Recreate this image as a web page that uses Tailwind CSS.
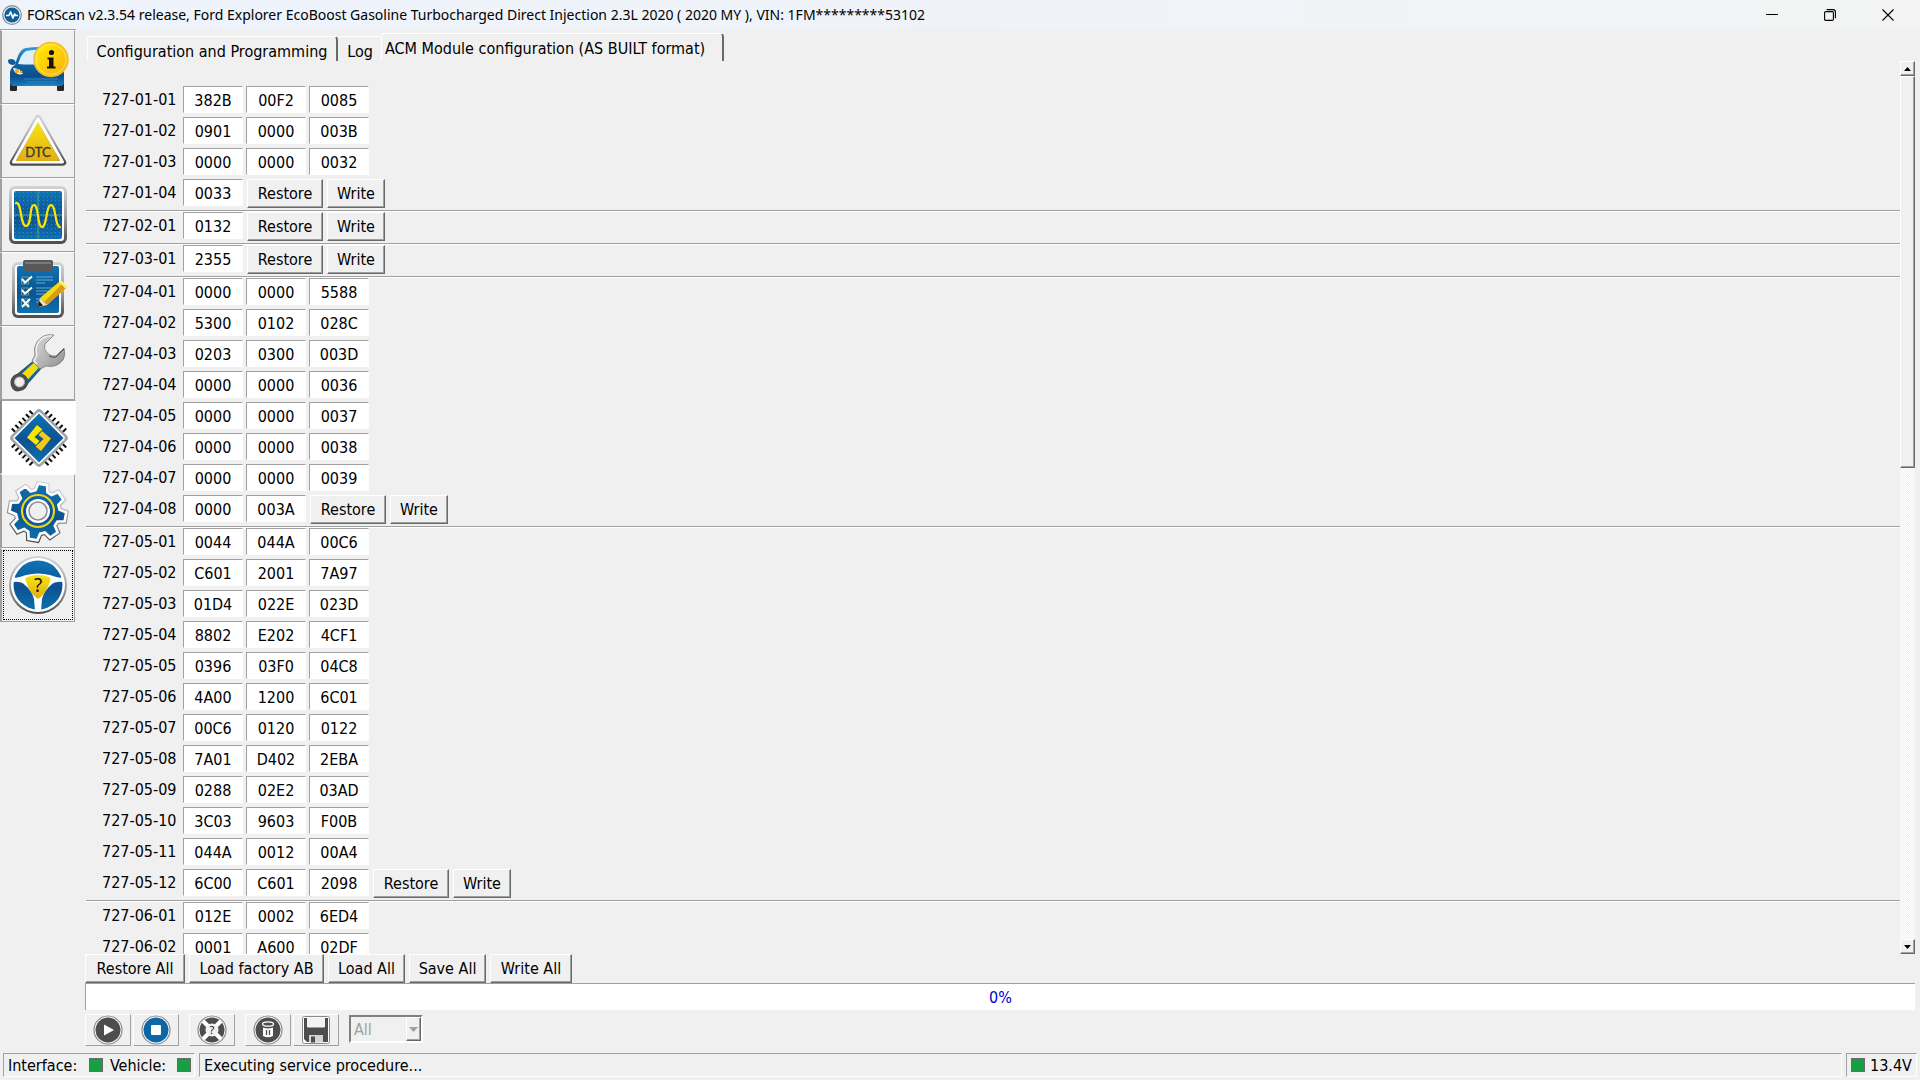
<!DOCTYPE html>
<html lang="en">
<head>
<meta charset="utf-8">
<title>FORScan v2.3.54</title>
<script src="https://cdn.jsdelivr.net/npm/@tailwindcss/browser@4"></script>
</head>
<body class="h-screen flex flex-col overflow-hidden bg-[#f0f0f0] text-black text-base leading-5 font-['DejaVu_Sans_Condensed','Noto_Sans',sans-serif]">

<header class="h-[29px] shrink-0 flex items-center bg-linear-to-r from-[#eef4fc] via-[#eff3f9] to-[#f3f3f3] pl-[2px]">
  <svg class="size-5 shrink-0" viewBox="0 0 20 20"><circle cx="10" cy="10" r="9.3" fill="#e8e8e8" stroke="#8d8d8d" stroke-width="1.2"/><circle cx="10" cy="10" r="7.6" fill="#0f5f9e"/><path d="M4 10.5h3l1.6-3.5 2.3 6 1.7-4 .8 1.5H16" fill="none" stroke="#fff" stroke-width="1.7" stroke-linejoin="round"/></svg>
  <h1 class="pl-[5px] flex-1 whitespace-nowrap text-sm font-['Noto_Sans','Open_Sans',sans-serif]">FORScan v2.3.54 release, Ford Explorer EcoBoost Gasoline Turbocharged Direct Injection 2.3L 2020 ( 2020 MY ), VIN: 1FM*********53102</h1>
  <div class="flex pr-[3px]">
    <button aria-label="Minimize" class="w-[58px] h-7 grid place-items-center"><svg class="size-3" viewBox="0 0 12 12"><path d="M0 5.5h12" stroke="#000"/></svg></button>
    <button aria-label="Restore window" class="w-[58px] h-7 grid place-items-center"><svg class="size-3" viewBox="0 0 12 12" fill="none" stroke="#000" stroke-width="1.1"><rect x=".6" y="2.6" width="8.8" height="8.8" rx="1.2"/><path d="M2.6.6h6.2a2.6 2.6 0 0 1 2.6 2.6v6"/></svg></button>
    <button aria-label="Close" class="w-[58px] h-7 grid place-items-center"><svg class="size-3" viewBox="0 0 12 12"><path d="M.5.5l11 11M11.5.5l-11 11" stroke="#000" stroke-width="1.1"/></svg></button>
  </div>
</header>

<div class="flex-1 min-h-0 flex">
  <nav aria-label="Sections" class="w-[76px] shrink-0 border-t border-[#a0a0a0] flex flex-col items-start">
    <button aria-label="Vehicle information" class="w-[75px] h-[74px] border border-l-2 border-t-white border-l-[#a0a0a0] border-r-[#a0a0a0] border-b-[#a0a0a0]">
      <svg class="size-[72px]" viewBox="0 0 72 72">
        <defs>
          <linearGradient id="car" x1="0" y1="0" x2="0" y2="1"><stop offset="0" stop-color="#3a9bd6"/><stop offset=".35" stop-color="#1169a8"/><stop offset=".75" stop-color="#0b4d8c"/><stop offset="1" stop-color="#1580bd"/></linearGradient>
          <linearGradient id="gold" x1="0" y1="0" x2="0" y2="1"><stop offset="0" stop-color="#f6e512"/><stop offset="1" stop-color="#e3ad13"/></linearGradient>
          <linearGradient id="coin" x1="0" y1="0" x2="1" y2="1"><stop offset="0" stop-color="#fff200"/><stop offset="1" stop-color="#fbab10"/></linearGradient>
          <linearGradient id="rim" x1="0" y1="0" x2="0" y2="1"><stop offset="0" stop-color="#d2d3d5"/><stop offset=".5" stop-color="#a4a4a6"/><stop offset="1" stop-color="#4c4c4e"/></linearGradient>
          <linearGradient id="blue" x1="0" y1="0" x2="0" y2="1"><stop offset="0" stop-color="#0e74b4"/><stop offset=".55" stop-color="#0c5291"/><stop offset="1" stop-color="#0f70ae"/></linearGradient>
          <linearGradient id="steel" x1="0" y1="0" x2="1" y2="1"><stop offset="0" stop-color="#d9d9d9"/><stop offset=".5" stop-color="#b9b9b9"/><stop offset="1" stop-color="#8b8b8b"/></linearGradient>
        </defs>
        <path d="M8 51h7v8q0 1-1 1H9q-1 0-1-1zM55 51h7v8q0 1-1 1h-5q-1 0-1-1z" fill="#26262b"/>
        <path d="M6 30q0-2 3-2 4 0 5 4l-2 2q-6 0-6-4z" fill="#0d5b9c"/>
        <path d="M13 34C16 24 18 18 24 17q12-2 24 0 8 4 10 17 4 4 4 9v8q0 4-4 4H12q-4 0-4-4V41q1-5 5-7z" fill="url(#car)"/>
        <path d="M16 33q3-10 8-13 10-2 18-1v14q-14 1-26 0z" fill="#dceffa"/>
        <path d="M11 37q7 0 10 6-8 2-10-6z" fill="#fff"/><circle cx="15" cy="40" r="2.2" fill="#f6a91b"/><circle cx="19" cy="41" r="1.5" fill="#f6a91b"/>
        <path d="M22 48h34M25 51h28M22 54h33" stroke="#3f8ec4" stroke-width=".8"/>
        <circle cx="49" cy="28.500" r="17" fill="url(#coin)" stroke="#f3bd2e" stroke-width="1.500"/>
        <circle cx="49" cy="28.500" r="15" fill="none" stroke="#ffe96a" stroke-width="1"/>
        <circle cx="49.500" cy="21.500" r="2.600" fill="#1a1208"/><path d="M45.500 26.500h6v9h2v2h-8.500v-2h2v-7h-1.500z" fill="#1a1208"/>
      </svg>
    </button>
    <button aria-label="Diagnostic trouble codes" class="w-[75px] h-[74px] border border-l-2 border-t-white border-l-[#a0a0a0] border-r-[#a0a0a0] border-b-[#a0a0a0]">
      <svg class="size-[72px]" viewBox="0 0 72 72"><path d="M36 13L61 57.500H11z" fill="#fff" stroke="url(#rim)" stroke-width="6.500" stroke-linejoin="round"/><path d="M36 14L60.500 57H11.500z" fill="none" stroke="#fff" stroke-width="3" stroke-linejoin="round"/><path d="M36 17L58 56H14z" fill="url(#gold)"/><text x="36" y="52" text-anchor="middle" font-family="Lato, sans-serif" font-size="13" fill="#3b3b33" stroke="#3b3b33" stroke-width=".4">DTC</text></svg>
    </button>
    <button aria-label="Oscilloscope" class="w-[75px] h-[74px] border border-l-2 border-t-white border-l-[#a0a0a0] border-r-[#a0a0a0] border-b-[#a0a0a0]">
      <svg class="size-[72px]" viewBox="0 0 72 72"><defs><pattern id="dots" width="4" height="4" patternUnits="userSpaceOnUse"><rect x="1" y="1" width="1" height="1" fill="#3a8bb0"/></pattern></defs><rect x="7" y="7" width="58" height="58" rx="6" fill="url(#rim)"/><rect x="10" y="10" width="52" height="52" rx="3" fill="#fff"/><rect x="12" y="12" width="48" height="48" rx="2" fill="url(#blue)"/><rect x="12" y="12" width="48" height="48" fill="url(#dots)"/><path d="M36 12v48M12 36h48" stroke="#3c9290" stroke-width="1.500"/><path d="M14 24c6-1 4 23 10 23s3-21 8-21 3 22 8 22 4-22 9-22 4 22 9 22" fill="none" stroke="#fce600" stroke-width="2.200" stroke-linecap="round"/></svg>
    </button>
    <button aria-label="Tests" class="w-[75px] h-[74px] border border-l-2 border-t-white border-l-[#a0a0a0] border-r-[#a0a0a0] border-b-[#a0a0a0]">
      <svg class="size-[72px]" viewBox="0 0 72 72"><rect x="10" y="9" width="52" height="56" rx="6" fill="url(#rim)"/><rect x="13" y="12" width="46" height="50" rx="3" fill="#fff"/><rect x="15" y="13" width="42" height="47" rx="2" fill="url(#blue)"/><path d="M21 9q0-2 2-2h26q2 0 2 2v7q0 2-2 2H23q-2 0-2-2z" fill="#58585a"/><path d="M23 10h26" stroke="#7a7a7c" stroke-width="2"/><path d="M19.500 24h7v7h-7zM19.500 35h7v7h-7zM19.500 46h7v7h-7z" fill="none" stroke="#5fa08a" stroke-width="1"/><path d="M20 26l3 3.500 7-6M20 37l3 3.500 7-6M20 46l7 8M28 46l-8 8" fill="none" stroke="#fff" stroke-width="2"/><path d="M34 24h17M34 27h17M34 30h9M34 35h17M34 38h14M34 41h9M34 46h8M34 49h6" stroke="#62a9d3" stroke-width="1"/><path d="M57 29l7 6-19 17-7-7z" fill="#f5da13"/><path d="M60 31l4 4-19 17-3-3z" fill="#d79c14"/><path d="M57 29l1-1q1-1 2 0l5 5q1 1 0 2l-1 1z" fill="#fff07a"/><path d="M38 45l7 7-8 2q-1 0-1-1z" fill="#f7e3b0"/><path d="M37 48l4 4.500-5 1.500z" fill="#17171a"/></svg>
    </button>
    <button aria-label="Service functions" class="w-[75px] h-[74px] border border-l-2 border-t-white border-l-[#a0a0a0] border-r-[#a0a0a0] border-b-[#a0a0a0]">
      <svg class="size-[72px]" viewBox="0 0 72 72"><path d="M32 33l8 8-16 18q-5 7-11 5-6-4-4-12z" fill="#4b4b4d"/><path d="M30 35l8 8-15 17-11-8z" fill="#0d67a8"/><path d="M32.500 35l5 5-14 15-6-6z" fill="#f2dc10"/><circle cx="17.500" cy="55" r="7" fill="#d8d8d8" stroke="#4b4b4d" stroke-width="3.500"/><circle cx="17.500" cy="55" r="5" fill="#f0f0f0" stroke="#a8a8aa"/><path d="M52 8q-11-2-17 7-4 6-2 13l-3 6 8 8 6-3q11 2 17-6 3-5 1-12l-8 8q-5 1-9-3t-2-9z" fill="url(#steel)" stroke="#77777a" stroke-width=".8"/><path d="M50 9q-9-1-14 7-3 6-1 12l-3 6 3 3" fill="none" stroke="#efefef" stroke-width="1.500"/><path d="M62 22l-8 8q-4 1-7-1" fill="none" stroke="#4b4b4d" stroke-width="1"/></svg>
    </button>
    <button aria-label="Configuration and programming" aria-pressed="true" class="w-[76px] h-[74px] bg-white border border-l-2 border-t-[#a0a0a0] border-l-[#8c8c8c] border-r-white border-b-white">
      <svg class="size-[72px]" viewBox="0 0 72 72"><g transform="rotate(45 37 37)"><path d="M24.500 11v52M29.500 11v52M34.500 11v52M39.500 11v52M44.500 11v52M49.500 11v52M11 24.500h52M11 29.500h52M11 34.500h52M11 39.500h52M11 44.500h52M11 49.500h52" stroke="#111" stroke-width="2"/><rect x="15.500" y="15.500" width="43" height="43" rx="4" fill="#a4a4a6"/><rect x="18" y="18" width="38" height="38" rx="2.500" fill="#fff"/></g><path d="M37 12.500L61.500 37 37 61.500 12.500 37z" fill="url(#blue)"/><path d="M35 24L25 36.500l9 7.500 3.500-4-5-4 8-7.500z" fill="#fae600"/><path d="M39 50l10-12.500-9-7.500-3.500 4 5 4-8 7.500z" fill="#f2cb12"/></svg>
    </button>
    <button aria-label="Settings" class="w-[75px] h-[74px] border border-l-2 border-t-white border-l-[#a0a0a0] border-r-[#a0a0a0] border-b-[#a0a0a0]">
      <svg class="size-[72px]" viewBox="0 0 72 72"><g transform="rotate(10 36 36)"><path d="M31.500 9h9l1.500 7 4.500 2 6-4 6.500 6.500-4 6 2 4.500 7 1.500v9l-7 1.500-2 4.500 4 6-6.500 6.500-6-4-4.500 2-1.500 7h-9l-1.500-7-4.500-2-6 4-6.500-6.500 4-6-2-4.500-7-1.500v-9l7-1.500 2-4.500-4-6 6.500-6.500 6 4 4.500-2z" fill="url(#blue)" stroke="url(#rim)" stroke-width="5"/><path d="M31.500 9h9l1.500 7 4.500 2 6-4 6.500 6.500-4 6 2 4.500 7 1.500v9l-7 1.500-2 4.500 4 6-6.500 6.500-6-4-4.500 2-1.500 7h-9l-1.500-7-4.500-2-6 4-6.500-6.500 4-6-2-4.500-7-1.500v-9l7-1.500 2-4.500-4-6 6.500-6.500 6 4 4.500-2z" fill="url(#blue)" stroke="#fff" stroke-width="2.600"/></g><circle cx="36" cy="36" r="16" fill="none" stroke="#edd31a" stroke-width="2.200"/><circle cx="36" cy="36" r="12" fill="#fff"/><circle cx="36" cy="36" r="9" fill="#f0f0f0" stroke="#8d8d8f" stroke-width="1.500"/></svg>
    </button>
    <button aria-label="Help" class="w-[75px] h-[74px] p-px border border-l-2 border-t-white border-l-[#a0a0a0] border-r-[#a0a0a0] border-b-[#a0a0a0]">
      <span class="size-full border border-dotted border-black grid place-items-center">
      <svg class="size-[66px]" viewBox="3 3 66 66"><circle cx="36" cy="36" r="29" fill="url(#rim)"/><circle cx="36" cy="36" r="27" fill="#fff"/><circle cx="36" cy="36" r="24.500" fill="url(#blue)"/><path d="M11 29q5 0 13-3 12-3 24 0 8 3 13 3v4q-8-1-12 3-7 6-9 14l-1 12h-6l-1-12q-2-8-9-14-4-4-12-3z" fill="#fff"/><path d="M25 28q11-4 22 0 2 1 1.500 3Q45 43 37.500 49q-1.500 1-3 0Q27 43 23.500 31q-.5-2 1.500-3z" fill="url(#gold)"/><text x="36" y="43" text-anchor="middle" font-family="Noto Sans, sans-serif" font-size="19" fill="#111">?</text></svg>
      </span>
    </button>
  </nav>

  <main class="flex-1 min-w-0 flex flex-col pl-[9px] pr-[5px]">
    <div role="tablist" class="h-8 shrink-0 flex items-end pt-[5px] pl-[2px]">
      <button role="tab" class="h-[25px] w-[251px] rounded-t-sm border-t border-l border-r-2 border-t-white border-l-white border-r-[#696969] whitespace-nowrap pt-[5px]">Configuration and Programming</button>
      <button role="tab" class="h-[25px] w-[42px] ml-px border-t border-t-white pt-[5px]">Log</button>
      <button role="tab" aria-selected="true" class="h-7 w-[343px] pl-[3px] text-left rounded-t-sm border-t border-l border-r-2 border-t-white border-l-white border-r-[#696969] whitespace-nowrap pt-[3px]">ACM Module configuration (AS BUILT format)</button>
    </div>

    <div class="flex-1 min-h-0 flex">
      <section id="blocks" aria-label="Module data" class="flex-1 min-w-0 overflow-hidden pt-[25px] pl-px"></section>
      <div aria-hidden="true" class="w-[15px] shrink-0 flex flex-col bg-[repeating-conic-gradient(#fff_0_25%,#f0f0f0_0_50%)] bg-size-[2px_2px]">
        <div class="h-[15px] grid place-items-center bg-[#f0f0f0] border border-t-white border-l-white border-r-[#696969] border-b-[#696969] shadow-[inset_-1px_-1px_0_#a0a0a0]"><svg class="w-[7px] h-1" viewBox="0 0 7 4"><path d="M3.500 0L7 4H0z"/></svg></div>
        <div class="h-[392px] bg-[#f0f0f0] border border-t-white border-l-white border-r-[#696969] border-b-[#696969] shadow-[inset_-1px_-1px_0_#a0a0a0]"></div>
        <div class="flex-1"></div>
        <div class="h-[15px] grid place-items-center bg-[#f0f0f0] border border-t-white border-l-white border-r-[#696969] border-b-[#696969] shadow-[inset_-1px_-1px_0_#a0a0a0]"><svg class="w-[7px] h-1" viewBox="0 0 7 4"><path d="M0 0h7L3.500 4z"/></svg></div>
      </div>
    </div>

    <div class="h-[29px] shrink-0 flex gap-1">
      <button class="w-[100px] pt-px whitespace-nowrap border border-t-white border-l-white border-r-[#696969] border-b-[#696969] shadow-[inset_-1px_-1px_0_#a0a0a0]">Restore All</button>
      <button class="w-[135px] pt-px whitespace-nowrap border border-t-white border-l-white border-r-[#696969] border-b-[#696969] shadow-[inset_-1px_-1px_0_#a0a0a0]">Load factory AB</button>
      <button class="w-[77px] pt-px whitespace-nowrap border border-t-white border-l-white border-r-[#696969] border-b-[#696969] shadow-[inset_-1px_-1px_0_#a0a0a0]">Load All</button>
      <button class="w-[77px] pt-px whitespace-nowrap border border-t-white border-l-white border-r-[#696969] border-b-[#696969] shadow-[inset_-1px_-1px_0_#a0a0a0]">Save All</button>
      <button class="w-[82px] pt-px whitespace-nowrap border border-t-white border-l-white border-r-[#696969] border-b-[#696969] shadow-[inset_-1px_-1px_0_#a0a0a0]">Write All</button>
    </div>
    <div role="progressbar" aria-valuenow="0" class="h-[27px] shrink-0 grid place-items-center pt-px bg-white border-t border-l border-[#a0a0a0] text-[#0000d0]">0%</div>

    <div class="h-[43px] shrink-0 flex items-start pt-1">
      <button aria-label="Run" class="w-[46px] h-8 grid place-items-center border border-t-white border-l-white border-r-[#a0a0a0] border-b-[#a0a0a0]"><svg class="size-[30px]" viewBox="0 0 30 30"><circle cx="15" cy="15" r="14" fill="#fff" stroke="#8a8a8c" stroke-width="1.200"/><circle cx="15" cy="15" r="12.500" fill="#4d4d4f"/><path d="M11 9.500l10 5.500-10 5.500z" fill="#fff"/></svg></button>
      <button aria-label="Stop" class="ml-[2px] w-[46px] h-8 grid place-items-center border border-t-white border-l-white border-r-[#a0a0a0] border-b-[#a0a0a0]"><svg class="size-[30px]" viewBox="0 0 30 30"><circle cx="15" cy="15" r="14" fill="#fff" stroke="#8a8a8c" stroke-width="1.200"/><circle cx="15" cy="15" r="12.500" fill="#0d66a8"/><rect x="10" y="10" width="10" height="10" rx="1" fill="#fff"/></svg></button>
      <button aria-label="Procedure help" class="ml-[10px] w-[46px] h-8 grid place-items-center border border-t-white border-l-white border-r-[#a0a0a0] border-b-[#a0a0a0]"><svg class="size-[30px]" viewBox="0 0 30 30"><circle cx="15" cy="15" r="14" fill="#fff" stroke="#8a8a8c" stroke-width="1.200"/><circle cx="15" cy="15" r="12.500" fill="#4d4d4f"/><path d="M6 6l18 18M24 6L6 24" stroke="#fff" stroke-width="4"/><circle cx="15" cy="15" r="6.500" fill="#f0f0f0"/><text x="15" y="19" text-anchor="middle" font-family="Noto Sans, sans-serif" font-size="11" fill="#111">?</text></svg></button>
      <button aria-label="Clear" class="ml-[10px] w-[46px] h-8 grid place-items-center border border-t-white border-l-white border-r-[#a0a0a0] border-b-[#a0a0a0]"><svg class="size-[30px]" viewBox="0 0 30 30"><circle cx="15" cy="15" r="14" fill="#fff" stroke="#8a8a8c" stroke-width="1.200"/><circle cx="15" cy="15" r="12.500" fill="#4d4d4f"/><ellipse cx="15" cy="9" rx="5.500" ry="2.200" fill="#4d4d4f" stroke="#fff" stroke-width="1.300"/><path d="M10 12.500q5 2 10 0V21q-5 2.500-10 0z" fill="#fff"/><path d="M13.500 15v5M16.500 15v5" stroke="#4d4d4f" stroke-width="1.300"/></svg></button>
      <button aria-label="Save" class="ml-[2px] w-[46px] h-8 grid place-items-center border border-t-white border-l-white border-r-[#a0a0a0] border-b-[#a0a0a0]"><svg class="size-[30px]" viewBox="0 0 30 30"><rect x="1.500" y="1.500" width="27" height="27" rx="2" fill="#fff" stroke="#8a8a8c"/><path d="M3 3h24v24H6l-3-3z" fill="#4d4d4f"/><path d="M6 2.500h18v9q0 1-1 1H7q-1 0-1-1z" fill="#f2f2f2"/><path d="M8 20h14v7.500H8z" fill="#d4d4d4"/><path d="M10 21.500h4v6h-4z" fill="#4d4d4f"/></svg></button>
      <div class="ml-[10px] mt-px w-[74px] h-7 relative">
        <select disabled aria-label="Filter" class="block size-full appearance-none bg-transparent pl-[3px] pt-[2px] text-[#a0a0a0] border-2 border-t-[#808080] border-l-[#808080] border-r-white border-b-white opacity-100"><option>All</option></select>
        <span class="absolute right-[2px] top-[2px] w-[15px] h-6 grid place-items-center pointer-events-none border border-t-white border-l-white border-r-[#696969] border-b-[#696969] shadow-[inset_-1px_-1px_0_#a0a0a0]"><svg class="w-[9px] h-[5px]" viewBox="0 0 9 5"><path d="M0 0h9L4.500 5z" fill="#a0a0a0"/></svg></span>
      </div>
    </div>
  </main>
</div>

<footer class="h-[27px] shrink-0 flex gap-1 pl-[3px] pr-[3px] pb-[3px]">
  <div class="w-48 flex items-center pl-1 border border-t-[#a0a0a0] border-l-[#a0a0a0] border-r-white border-b-white">
    <span class="w-[81px] pt-[2px]">Interface:</span><span class="size-[14px] bg-[#16a043] border border-[#696969]"></span>
    <span class="w-[67px] ml-[7px] pt-[2px]">Vehicle:</span><span class="size-[14px] bg-[#16a043] border border-[#696969]"></span>
  </div>
  <div class="flex-1 flex items-center pl-1 pt-[2px] border border-t-[#a0a0a0] border-l-[#a0a0a0] border-r-white border-b-white">Executing service procedure...</div>
  <div class="w-[71px] flex items-center gap-[5px] pl-1 border border-t-[#a0a0a0] border-l-[#a0a0a0] border-r-white border-b-white"><span class="size-[14px] shrink-0 bg-[#16a043] border border-[#696969]"></span><span class="pt-[2px]">13.4V</span></div>
</footer>

<script>
const data = {
  '01': ['382B 00F2 0085', '0901 0000 003B', '0000 0000 0032', '0033'],
  '02': ['0132'],
  '03': ['2355'],
  '04': ['0000 0000 5588', '5300 0102 028C', '0203 0300 003D', '0000 0000 0036', '0000 0000 0037', '0000 0000 0038', '0000 0000 0039', '0000 003A'],
  '05': ['0044 044A 00C6', 'C601 2001 7A97', '01D4 022E 023D', '8802 E202 4CF1', '0396 03F0 04C8', '4A00 1200 6C01', '00C6 0120 0122', '7A01 D402 2EBA', '0288 02E2 03AD', '3C03 9603 F00B', '044A 0012 00A4', '6C00 C601 2098'],
  '06': ['012E 0002 6ED4', '0001 A600 02DF'],
};
const button = (text, size) => `<button class="${size} h-[29px] ml-1 pt-px border border-t-white border-l-white border-r-[#696969] border-b-[#696969] shadow-[inset_-1px_-1px_0_#a0a0a0]">${text}</button>`;
document.getElementById('blocks').innerHTML = Object.entries(data).map(([block, rows]) => {
  const lines = rows.map((row, i) => {
    const id = `727-${block}-${String(i + 1).padStart(2, '0')}`;
    const fields = row.split(' ').map((v, n) =>
      `<input ${n ? `aria-label="${id} word ${n + 1}"` : `id="f-${id}"`} value="${v}" maxlength="4" class="w-[60px] h-[27px] ml-[3px] pt-[2px] bg-white text-center border border-t-[#a0a0a0] border-l-[#a0a0a0] border-r-white border-b-white">`).join('');
    const last = i === rows.length - 1 && block !== '06';
    return `<div class="h-[31px] flex items-start"><label for="f-${id}" class="w-[78px] h-[27px] leading-[27px] whitespace-nowrap">${id}</label>${fields}${last ? button('Restore', 'w-[76px]') + button('Write', 'w-[58px]') : ''}</div>`;
  }).join('');
  return `<div class="pl-4 border-b border-[#a0a0a0] shadow-[0_1px_0_#fff] mb-px">${lines}</div>`;
}).join('');
</script>
</body>
</html>
